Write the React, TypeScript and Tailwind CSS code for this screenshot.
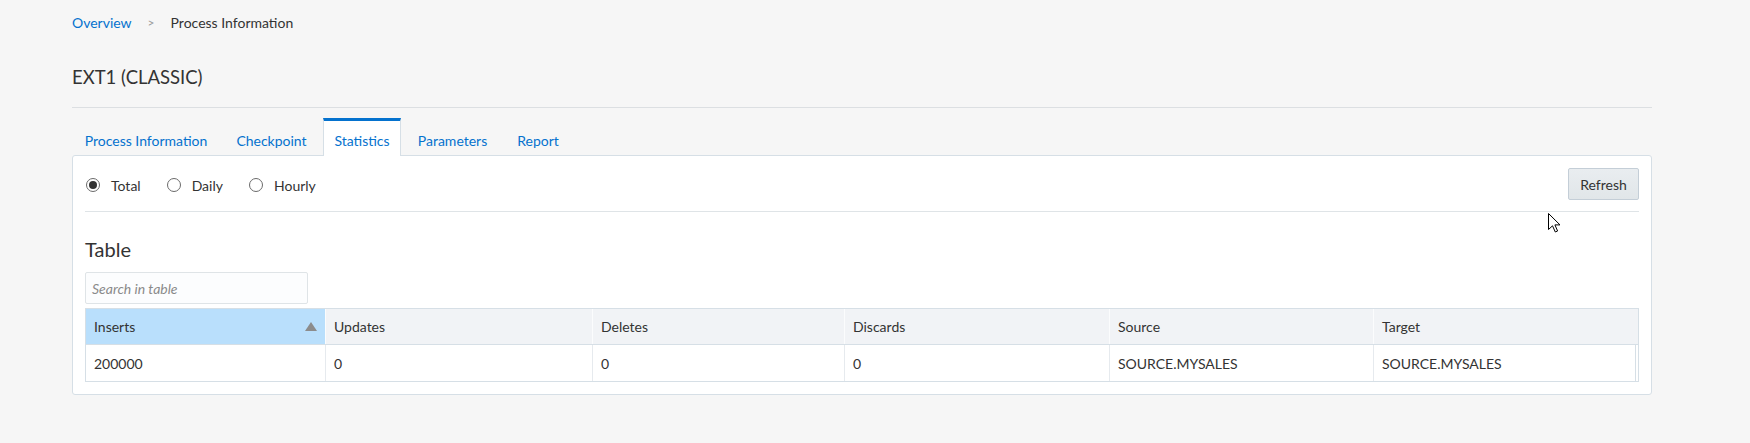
import React from "react";

const font = { fontFamily: "Lato, 'Open Sans', Arial, sans-serif" };

function Radio({ label, checked }: { label: string; checked?: boolean }) {
  return (
    <label className="flex items-center gap-[11px] text-[14px] text-[#333]">
      <span className="flex h-[14px] w-[14px] items-center justify-center rounded-full border border-[#6b6b6b] bg-white">
        {checked && <span className="h-[8px] w-[8px] rounded-full bg-[#333]" />}
      </span>
      <span>{label}</span>
    </label>
  );
}

const tabs = [
  { label: "Process Information", w: "w-[148px]" },
  { label: "Checkpoint", w: "w-[103px]" },
  { label: "Statistics", w: "w-[78px]", active: true },
  { label: "Parameters", w: "w-[103px]" },
  { label: "Report", w: "w-[68px]" },
];

const cols = ["Inserts", "Updates", "Deletes", "Discards", "Source", "Target"];
const row = ["200000", "0", "0", "0", "SOURCE.MYSALES", "SOURCE.MYSALES"];

export default function App() {
  return (
    <div
      className="relative h-[443px] w-[1750px] overflow-hidden bg-[#f6f6f6] text-[#333]"
      style={font}
    >
      <div className="ml-[72px] w-[1580px]">
        {/* breadcrumb */}
        <div className="mt-[13px] flex h-[20px] items-center text-[14px] leading-[20px]">
          <span className="text-[#0572ce]">Overview</span>
          <span className="ml-[16px] text-[12px] text-[#9a9a9a]">&gt;</span>
          <span className="ml-[16px] text-[#333]">Process Information</span>
        </div>

        {/* title */}
        <h1 className="mt-[30px] h-[28px] text-[18.5px] font-normal leading-[28px] text-[#333]">
          EXT1 (CLASSIC)
        </h1>
        <div className="mt-[16px] h-px bg-[#dcdfe2]" />

        {/* tabs */}
        <div className="mt-[10px] flex h-[37px] items-stretch">
          {tabs.map((t) =>
            t.active ? (
              <div
                key={t.label}
                className={`${t.w} relative z-10 -mb-px flex h-[38px] items-start justify-center border-x border-t-[3px] border-x-[#d6dfe6] border-t-[#0572ce] bg-white pt-[10px] text-[14px] leading-[20px] text-[#0572ce]`}
              >
                {t.label}
              </div>
            ) : (
              <div
                key={t.label}
                className={`${t.w} flex items-start justify-center pt-[13px] text-[14px] leading-[20px] text-[#0572ce]`}
              >
                {t.label}
              </div>
            )
          )}
        </div>

        {/* panel */}
        <div className="h-[240px] rounded-[3px] border border-[#d6dfe6] bg-white px-[12px] pt-[12px]">
          <div className="flex h-[32px] items-center justify-between">
            <div className="flex items-center gap-[26px] pl-[1px] pt-[2px]">
              <Radio label="Total" checked />
              <Radio label="Daily" />
              <Radio label="Hourly" />
            </div>
            <button className="h-[32px] w-[71px] rounded-[2px] border border-[#c4ced7] bg-gradient-to-b from-[#e9edf0] to-[#e1e6e9] text-[14px] text-[#333]">
              Refresh
            </button>
          </div>
          <div className="mt-[11px] h-px bg-[#dfe4e7]" />

          <h2 className="mt-[23px] h-[28px] text-[20px] font-normal leading-[28px] text-[#333]">
            Table
          </h2>

          <div className="mt-[9px] flex h-[32px] w-[223px] items-center rounded-[2px] border border-[#dfe4e7] bg-[#fcfdfe] px-[6px] text-[14px] italic text-[#8a8a8a]">
            Search in table
          </div>

          {/* table */}
          <div className="mt-[4px] border border-[#d6dfe6]">
            <div className="grid h-[36px] grid-cols-[239px_267px_252px_265px_264px_1fr] border-b border-[#d6dfe6] bg-[#f1f3f6]">
              {cols.map((c, i) => (
                <div
                  key={c}
                  className={`flex items-center justify-between px-[8px] text-[14px] text-[#333] ${
                    i === 0 ? "bg-[#b9dffc]" : "border-l border-[#fbfcfd]"
                  }`}
                >
                  <span>{c}</span>
                  {i === 0 && (
                    <svg width="12" height="9" viewBox="0 0 12 9">
                      <polygon points="6,0 12,9 0,9" fill="#8c8c8c" />
                    </svg>
                  )}
                </div>
              ))}
            </div>
            <div className="grid h-[36px] grid-cols-[239px_267px_252px_265px_264px_1fr]">
              {row.map((c, i) => (
                <div
                  key={i}
                  className={`flex items-center px-[8px] text-[14px] text-[#333] ${
                    i === 0 ? "" : "border-l border-[#e6eaee]"
                  } ${i === 5 ? "mr-[2px] border-r border-r-[#d6dfe6]" : ""}`}
                >
                  {c}
                </div>
              ))}
            </div>
          </div>
        </div>
      </div>

      {/* mouse cursor */}
      <svg
        className="absolute left-[1548px] top-[213px]"
        width="13"
        height="20"
        viewBox="0 0 13 20"
      >
        <path
          d="M0.5 0.5 L0.5 16.5 L4.5 12.8 L7.3 19 L9.6 18 L6.9 11.9 L12 11.9 Z"
          fill="#fff"
          stroke="#000"
          strokeWidth="1"
          strokeLinejoin="miter"
        />
      </svg>
    </div>
  );
}
